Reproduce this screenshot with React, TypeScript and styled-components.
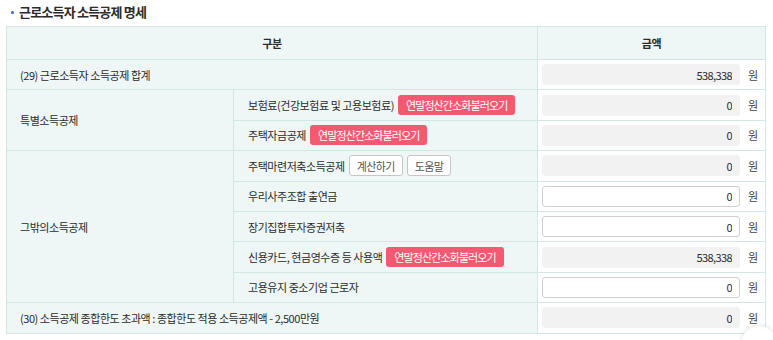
import React from 'react';
import styled, { createGlobalStyle } from 'styled-components';

const GlobalStyle = createGlobalStyle`
  body {
    margin: 0;
    background: #fff;
    font-family: "Noto Sans CJK KR", "Noto Sans", sans-serif;
    color: #333;
  }
`

const Page = styled.div`
  position: relative;
  width: 773px;
  height: 340px;
  overflow: hidden;
  padding: 3px 8px 0 6px;
  box-sizing: border-box;
`

const Title = styled.h3`
  display: flex;
  align-items: center;
  gap: 5px;
  margin: 0 0 6px 5px;
  height: 17px;
  font-size: 13px;
  font-weight: 700;
  color: #2b2b2b;
  letter-spacing: -0.8px;

  &::before {
    content: '';
    width: 3px;
    height: 3px;
    margin-top: 2px;
    border-radius: 50%;
    background: #2d6be0;
  }
`

const Table = styled.table`
  width: 759px;
  border-collapse: collapse;
  table-layout: fixed;
  font-size: 11px;
  letter-spacing: -0.45px;
`

const Row = styled.tr`
  height: 30.4px;
`

const HeadCell = styled.th`
  background: #eef7f6;
  border: 1px solid #d2e6e5;
  font-weight: 700;
  font-size: 11px;
  color: #2b2b2b;
  height: 30px;
`

const LabelCell = styled.td<{ $indent?: number }>`
  background: #eef7f6;
  border: 1px solid #d2e6e5;
  padding: 0 0 0 ${p => p.$indent ?? 13}px;
  color: #2b2b2b;
  white-space: nowrap;
`

const AmountCell = styled.td`
  background: #fff;
  border: 1px solid #d2e6e5;
  padding: 0 0 0 4px;
`

const Inline = styled.div`
  display: flex;
  align-items: center;
  gap: 4px;
`

const AmountBox = styled.div`
  display: flex;
  align-items: center;
`

const Input = styled.input<{ $readOnly?: boolean }>`
  width: 198px;
  height: 21px;
  box-sizing: border-box;
  border: 1px solid ${p => p.$readOnly ? '#f2f2f2' : '#cfcfcf'};
  background: ${p => p.$readOnly ? '#f2f2f2' : '#fff'};
  border-radius: 3px;
  text-align: right;
  padding: 0 7px;
  font-family: "Noto Sans CJK KR", "Noto Sans", sans-serif;
  font-size: 11px;
  letter-spacing: -0.6px;
  color: #2b2b2b;
  outline: none;
`

const Won = styled.span`
  margin-left: 8px;
  font-size: 11px;
  color: #444;
`

const RedButton = styled.button`
  height: 20px;
  padding: 0 8px;
  border: none;
  border-radius: 3px;
  background: #f35a72;
  color: #fff;
  font-family: "Noto Sans CJK KR", "Noto Sans", sans-serif;
  font-size: 11px;
  letter-spacing: -0.9px;
  cursor: pointer;
`

const GrayButton = styled.button`
  height: 21px;
  padding: 0 7px;
  border: 1px solid #c6c6c6;
  border-radius: 3px;
  background: #fff;
  color: #555;
  font-family: "Noto Sans CJK KR", "Noto Sans", sans-serif;
  font-size: 11px;
  letter-spacing: -0.6px;
  cursor: pointer;
`

const FloatCircle = styled.div`
  position: absolute;
  right: -4px;
  bottom: -22px;
  width: 36px;
  height: 36px;
  border-radius: 50%;
  background: #fff;
  box-shadow: 0 0 4px rgba(0, 0, 0, 0.15);
`

const Amount = ({ value, readOnly }: { value: string; readOnly?: boolean }) => (
  <AmountCell>
    <AmountBox>
      <Input $readOnly={readOnly} readOnly={readOnly} defaultValue={value} />
      <Won>원</Won>
    </AmountBox>
  </AmountCell>
)

const App = () => {
  return <Page>
    <GlobalStyle />
    <Title>근로소득자 소득공제 명세</Title>
    <Table>
      <colgroup>
        <col style={{ width: 227 }} />
        <col style={{ width: 304 }} />
        <col style={{ width: 228 }} />
      </colgroup>
      <thead>
        <Row>
          <HeadCell colSpan={2}>구분</HeadCell>
          <HeadCell>금액</HeadCell>
        </Row>
      </thead>
      <tbody>
        <Row>
          <LabelCell colSpan={2}>(29) 근로소득자 소득공제 합계</LabelCell>
          <Amount value="538,338" readOnly />
        </Row>
        <Row>
          <LabelCell rowSpan={2}>특별소득공제</LabelCell>
          <LabelCell $indent={14}>
            <Inline>보험료(건강보험료 및 고용보험료)<RedButton>연말정산간소화불러오기</RedButton></Inline>
          </LabelCell>
          <Amount value="0" readOnly />
        </Row>
        <Row>
          <LabelCell $indent={14}>
            <Inline>주택자금공제<RedButton>연말정산간소화불러오기</RedButton></Inline>
          </LabelCell>
          <Amount value="0" readOnly />
        </Row>
        <Row>
          <LabelCell rowSpan={5}>그밖의소득공제</LabelCell>
          <LabelCell $indent={14}>
            <Inline>주택마련저축소득공제<GrayButton>계산하기</GrayButton><GrayButton>도움말</GrayButton></Inline>
          </LabelCell>
          <Amount value="0" readOnly />
        </Row>
        <Row>
          <LabelCell $indent={14}>우리사주조합 출연금</LabelCell>
          <Amount value="0" />
        </Row>
        <Row>
          <LabelCell $indent={14}>장기집합투자증권저축</LabelCell>
          <Amount value="0" />
        </Row>
        <Row>
          <LabelCell $indent={14}>
            <Inline>신용카드, 현금영수증 등 사용액<RedButton>연말정산간소화불러오기</RedButton></Inline>
          </LabelCell>
          <Amount value="538,338" readOnly />
        </Row>
        <Row>
          <LabelCell $indent={14}>고용유지 중소기업 근로자</LabelCell>
          <Amount value="0" />
        </Row>
        <Row>
          <LabelCell colSpan={2}>(30) 소득공제 종합한도 초과액 : 종합한도 적용 소득공제액 - 2,500만원</LabelCell>
          <Amount value="0" readOnly />
        </Row>
      </tbody>
    </Table>
    <FloatCircle />
  </Page>
}

export default App
